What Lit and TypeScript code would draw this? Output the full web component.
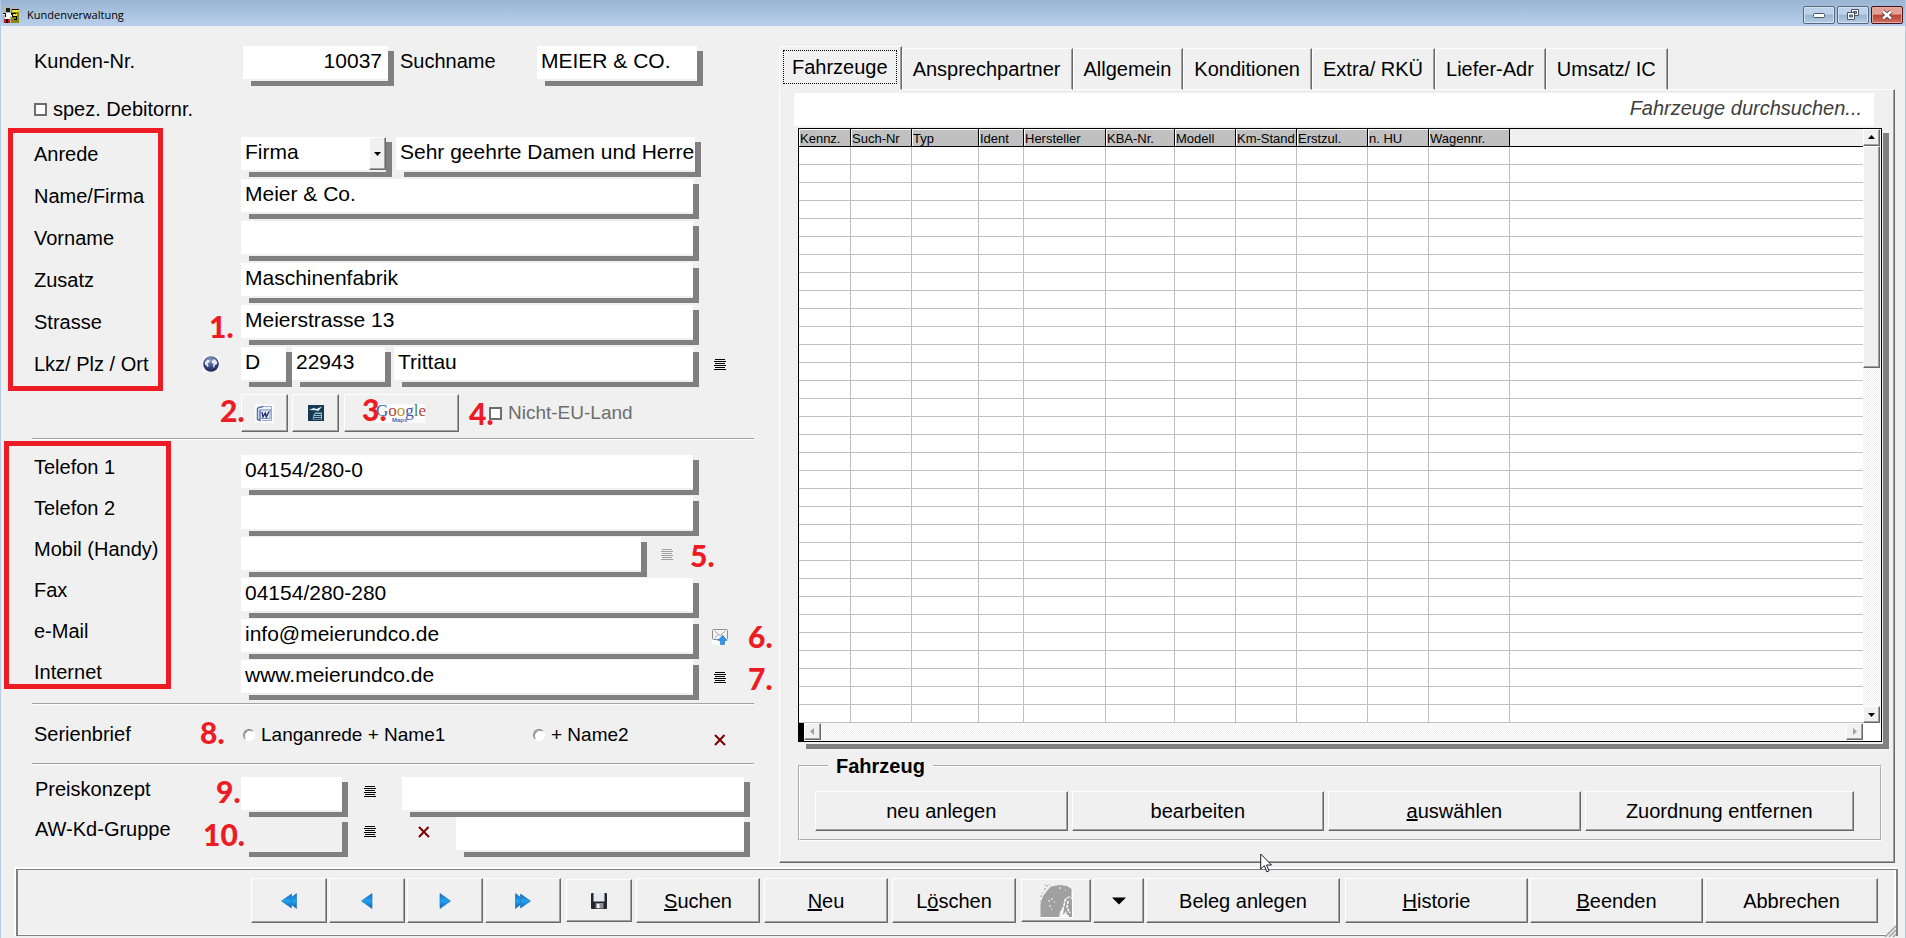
import { LitElement, html, css, svg, nothing } from "lit";
import { customElement } from "lit/decorators.js";
import { classMap } from "lit/directives/class-map.js";
import { styleMap } from "lit/directives/style-map.js";

interface Column { name: string; width: number; }
interface Mark { text: string; x: number; y: number; }

const TABS = ["Fahrzeuge", "Ansprechpartner", "Allgemein", "Konditionen", "Extra/ RKÜ", "Liefer-Adr", "Umsatz/ IC"];

const COLUMNS: Column[] = [
  { name: "Kennz.", width: 52 },
  { name: "Such-Nr", width: 61 },
  { name: "Typ", width: 67 },
  { name: "Ident", width: 45 },
  { name: "Hersteller", width: 82 },
  { name: "KBA-Nr.", width: 69 },
  { name: "Modell", width: 61 },
  { name: "Km-Stand", width: 61 },
  { name: "Erstzul.", width: 71 },
  { name: "n. HU", width: 61 },
  { name: "Wagennr.", width: 81 },
];

const ROW_COUNT = 32;

/* Numbered callouts, placed freely over the form. */
const MARKS: Mark[] = [
  { text: "1.", x: 209, y: 311 },
  { text: "2.", x: 220, y: 395 },
  { text: "3.", x: 362, y: 394 },
  { text: "4.", x: 469, y: 398 },
  { text: "5.", x: 690, y: 540 },
  { text: "6.", x: 748, y: 621 },
  { text: "7.", x: 748, y: 663 },
  { text: "8.", x: 200, y: 717 },
  { text: "9.", x: 216, y: 776 },
  { text: "10.", x: 203, y: 819 },
];

const listIcon = html`<svg width="12" height="12" viewBox="0 0 12 12" aria-hidden="true" shape-rendering="crispEdges">
  <path d="M1 .5h10M0 2.5h12M1 4.5h10M0 6.5h12M1 8.5h10M0 10.5h12" stroke="currentColor" fill="none" /></svg>`;

const crossIcon = html`<svg width="12" height="12" viewBox="0 0 12 12" aria-hidden="true">
  <path d="M1 1L11 11M10.500 1L1 11" stroke="#7d0000" stroke-width="2" fill="none" /></svg>`;

const globeIcon = html`<svg width="16" height="16" viewBox="0 0 16 16" aria-hidden="true">
  <defs><radialGradient id="sea" cx=".45" cy=".25" r=".8"><stop offset="0" stop-color="#8b9cc4" /><stop offset=".6" stop-color="#34477c" /><stop offset="1" stop-color="#141f4c" /></radialGradient></defs>
  <rect width="16" height="16" fill="#fafafa" /><circle cx="8" cy="8" r="7.800" fill="url(#sea)" />
  <path d="M2 6L4.500 3.500L7 4.500L6 6.500L4.500 7.500L5.500 9.500L5 11.500L3.500 9.500L2 8.500zM8.500 5L11.500 3L14 5.500L14 8L12 9L11 12L10 10.500L10.500 8L9 7z" fill="#e4eaf7" /></svg>`;

const wordIcon = html`<svg width="19" height="19" viewBox="0 0 19 19" aria-hidden="true">
  <rect width="19" height="19" fill="#fbfbfd" />
  <path d="M7 2.500H16.500V16.500H7" fill="#f4f7fd" stroke="#9aa9c8" />
  <path d="M2.500 4L8 2.500M2.500 4V15.500L5 16.500V6.500H16" fill="none" stroke="#5a6fae" stroke-width="1.500" />
  <rect x="5.500" y="6" width="9.500" height="8.500" fill="#e9effb" stroke="#7f93c6" />
  <path d="M7 8L8 13L10.300 9L11.300 13L14 7.500" fill="none" stroke="#1d2f66" stroke-width="1.300" /></svg>`;

const officeIcon = html`<svg width="16" height="16" viewBox="0 0 16 16" aria-hidden="true">
  <rect width="16" height="16" fill="#173a52" />
  <path d="M1 5L5.500 3L8.500 4L14 1.500L10.500 6L7 5.200z" fill="#d9eef7" />
  <path d="M7 7.500H14V14.500H4.500L5.500 10z" fill="#8fb9cc" /><path d="M7 9.500h6M6 11.500h7M5.500 13.500h7.500" stroke="#173a52" /></svg>`;

const mailIcon = html`<svg width="16" height="16" viewBox="0 0 16 16" aria-hidden="true">
  <rect width="16" height="16" fill="#fafafa" />
  <rect x=".5" y=".5" width="15" height="10" rx="1" fill="#f3f3f3" stroke="#8d8d8d" />
  <path d="M2.500 2L8 6.500L13.500 2M2.500 9L6.500 5.500M13.500 9L9.500 5.500" fill="none" stroke="#a8a8a8" />
  <path d="M10.500 6.500L15 11.500H12.500V15.500H8.500V11.500H6z" fill="#2f96ee" stroke="#1b6fc4" stroke-width=".6" /></svg>`;

const blueGradient = svg`<linearGradient id="blue" x1="0" y1="0" x2="0" y2="1"><stop offset="0" stop-color="#1566c0" /><stop offset=".5" stop-color="#1fa4f2" /><stop offset="1" stop-color="#0f5cb8" /></linearGradient>`;

const navIcon = (forward: boolean, double: boolean) => html`<svg class=${classMap({ flip: forward })} width="16" height="16" viewBox="0 0 16 16" aria-hidden="true">
  <defs>${blueGradient}</defs>
  ${double
    ? svg`<path d="M15.500 .5V15.500L6 8z" fill="url(#blue)" stroke="#2a78bd" stroke-width=".7" /><path d="M10.500 1V15L.5 8z" fill="url(#blue)" stroke="#2a78bd" stroke-width=".7" />`
    : svg`<path d="M13 .5V15.500L2.500 8z" fill="url(#blue)" stroke="#2a78bd" stroke-width=".7" />`}</svg>`;

const saveIcon = html`<svg width="16" height="16" viewBox="0 0 16 16" aria-hidden="true">
  <rect width="16" height="16" rx="1" fill="#24262b" /><rect x="2.500" y="0" width="11" height="8.500" fill="#e4e9f4" />
  <rect x="4.500" y="10" width="8" height="5.500" fill="#8d9098" /><rect x="6" y="11" width="2.500" height="4" fill="#f4f4f6" /></svg>`;

const reliefIcon = html`<svg width="34" height="34" viewBox="0 0 34 34" aria-hidden="true">
  <path d="M1.500 33V20L4 12L8 7L12 2.500L20 1L28 2L32.500 5V14L30 12L26 15L25 22L21 28L20 33z" fill="#a0a0a0" />
  <path d="M26 16L31 13L33 16V33H29L27 27L24 31L25 24z" fill="#a0a0a0" />
  <path d="M26.500 15L24.500 23L21.500 30M29 17L28 24L31 29M23 32h8" stroke="#fff" stroke-width="1.500" fill="none" stroke-dasharray="3 1" />
  <path d="M1 12h2M3 9h1M5 5h2M7 2h2M6 1h1M10 1h1M1 17h1M20 3h1M24 5h1" stroke="#a0a0a0" />
  <path d="M12 15h2M9 17h2M15 18h1M10 22h2M12 25h1M20 4h2M26 6h1" stroke="#fff" />
  <path d="M1 33.500H33.500V6" stroke="#fff" fill="none" /></svg>`;

const appIcon = html`<svg width="16" height="16" viewBox="0 0 16 16" aria-hidden="true" shape-rendering="crispEdges">
  <rect width="16" height="16" fill="#b5b8b8" /><rect x="8" y="2" width="8" height="14" fill="#8a8410" />
  <path d="M9 3h7v2H9zM8 7h6v2H8z" fill="#f5e638" /><path d="M9 2.500h7M8 6.500h5M9 9.500h4v3h-2" stroke="#000" fill="none" />
  <rect x="3" y="1" width="4" height="4" fill="#20200a" /><path d="M0 6h8l2 3-2 1-1-2v4H2V8H0z" fill="#fff" />
  <path d="M0 6.500h2v3M8 6.500l2 2" stroke="#111" fill="none" /><path d="M1 12h2v4H1zM5 12h2v4H5z" fill="#d11" /><path d="M3 12h2v4H3z" fill="#111" /></svg>`;

const caret = (dir: "up" | "down" | "left" | "right") => {
  const d = { up: "M0 5L3.500 1L7 5z", down: "M0 2L3.500 6L7 2z", left: "M5 0L1 3.500L5 7z", right: "M2 0L6 3.500L2 7z" }[dir];
  return html`<svg width="7" height="7" viewBox="0 0 7 7" aria-hidden="true"><path d=${d} fill="currentColor" /></svg>`;
};

@customElement("app-root")
export class AppRoot extends LitElement {
  static styles = css`
    :host {
      display: flex;
      flex-direction: column;
      box-sizing: border-box;
      position: relative;
      min-height: 100vh;
      background: #f0f0f0;
      border: solid #b3cbe8;
      border-width: 0 1px;
      overflow: hidden;
      color: #000;
      font: 20px/22px "Liberation Sans", Arial, sans-serif;
    }
    *, *::before, *::after { box-sizing: border-box; }
    svg { display: block; flex: none; }
    button, input, select { font: inherit; color: inherit; margin: 0; border-radius: 0; }

    .titlebar {
      display: flex;
      align-items: center;
      gap: 8px;
      height: 26px;
      padding: 3px 2px 0 2px;
      background: linear-gradient(#9ab4d3, #b8d0ea);
      font: 11px/16px "Open Sans", "Noto Sans", sans-serif;
    }
    .titlebar h1 { flex: 1; margin: 0; font: inherit; }
    .window-buttons { display: flex; gap: 2px; }
    .win {
      display: grid;
      place-items: center;
      width: 32px;
      height: 18px;
      padding: 0;
      border: 1px solid #55667d;
      border-radius: 2px;
      box-shadow: inset 0 0 0 1px #d4e2f2;
      background: linear-gradient(#bdd1e8 45%, #98b4d2 50%, #b4cde6);
    }
    .win.close {
      border-color: #47131c;
      box-shadow: inset 0 0 0 1px #e6aaa0;
      background: linear-gradient(#e3a096 45%, #bc4030 50%, #cf7261);
    }

    main {
      flex: 1;
      display: grid;
      grid-template-columns: minmax(0, 778px) minmax(0, 1fr);
      padding: 20px 10px 3px 0;
    }

    .form { padding: 0 25px 0 31px; }
    .row {
      display: grid;
      grid-template-columns: 171px 38px minmax(0, 1fr) 30px;
      padding: 0 25px 0 0;
      align-items: start;
    }
    .caption { padding: 4px 0 0 2px; white-space: nowrap; }
    .controls { grid-column: 3; display: flex; }
    .number-row { padding-right: 21px; }
    .number-row .controls { padding-left: 2px; }
    .search-label { width: 143px; }
    .number-row .search-label { padding-left: 6px; }
    .group { display: grid; gap: 2px; margin-top: 17px; }
    .group .caption { padding-top: 6px; }
    .contact { gap: 1px; margin-top: 15px; }
    .group.contact .caption, .pricing .caption { padding-top: 1px; }
    .aside { grid-column: 2; height: 34px; display: flex; align-items: center; }

    .field {
      flex: 1;
      min-width: 0;
      height: 40px;
      padding: 0 6px 7px 0;
      background:
        linear-gradient(#808080, #808080) right bottom / calc(100% - 8px) 5px no-repeat,
        linear-gradient(#808080, #808080) right bottom / 6px calc(100% - 5px) no-repeat;
    }
    .field.fixed { flex: none; }
    .w-country { width: 51px; }
    .w-zip { width: 99px; margin-right: 3px; }
    .w-short { width: 107px; }
    .w-medium { width: 151px; }
    .greeting-row { padding-right: 23px; }
    .salutation { margin-left: 4px; }
    .field input, .field select {
      display: block;
      width: 100%;
      height: 33px;
      padding: 0 0 3px 4px;
      border: 0;
      outline: 0;
      background: #fff;
      font-size: 21px;
      appearance: none;
    }
    .field input.number { text-align: right; padding-right: 6px; }
    .field input:disabled { background: #f0f0f0; }
    .combo { display: flex; }
    .combo select { flex: 1; }
    .drop {
      display: grid;
      place-items: center;
      width: 17px;
      height: 33px;
      pointer-events: none;
    }

    .glyph {
      display: flex;
      align-items: center;
      justify-content: center;
      width: 16px;
      height: 36px;
      padding: 0;
      border: 0;
      background: none;
    }
    .glyph:disabled { color: #a0a0a0; }
    .trail { justify-self: end; margin-right: 1px; }
    .inline { margin: 0 24px 0 12px; }
    .pricing .glyph { height: 30px; }

    .raised {
      border: 1px solid;
      border-color: #fff #696969 #696969 #fff;
      box-shadow: inset -1px -1px #a0a0a0;
      background: #f0f0f0;
      padding: 0;
      white-space: nowrap;
    }
    button.raised { display: flex; align-items: center; justify-content: center; font-size: 20px; }

    .option { display: flex; align-items: center; gap: 6px; white-space: nowrap; }
    .option input[type="checkbox"] {
      appearance: none;
      width: 13px;
      height: 13px;
      border: 2px solid #6d6d6d;
      background: #fff;
    }
    .option input[type="radio"] {
      appearance: none;
      width: 12px;
      height: 12px;
      border: 1px solid;
      border-color: #808080 #fff #fff #808080;
      border-radius: 50%;
      background: #fff;
      box-shadow: inset 1px 1px #a0a0a0;
    }
    .special { padding: 0 0 0 2px; margin-top: 12px; }
    .tools { margin-top: 7px; }
    .tools .raised { height: 38px; width: 47px; margin-right: 4px; }
    .tools .raised.maps { width: 115px; margin: 0 30px 0 1px; padding-right: 2px; }
    .tools .option { color: #6d6d6d; font-size: 19px; }
    .brand {
      width: 49px;
      height: 19px;
      padding: 0;
      background: #fcfcfc;
      font: 17px/14px "Liberation Serif", serif;
      text-align: left;
    }
    .brand small { display: block; padding-left: 16px; font: bold 6px/5px "Liberation Sans", sans-serif; color: #4a68b8; }
    .c-blue { color: #3c5aa6; }
    .c-red { color: #b8463c; }
    .c-gold { color: #b99a32; }
    .c-green { color: #4c8a4c; }

    hr { margin: 0; border: 0; height: 2px; border-top: 1px solid #a0a0a0; background: #fff; }
    .after-tools { margin-top: 6px; }
    .after-contact { margin-top: 3px; }
    .serial { height: 58px; align-items: center; }
    .serial .controls { padding-left: 2px; padding-top: 2px; font-size: 19px; }
    .serial .caption { padding-top: 0; }
    .serial .trail { height: 46px; align-self: end; padding: 0; }
    .serial .option:first-child { width: 290px; }
    .pricing { margin-top: 12px; }
    .pricing .row { padding-right: 4px; grid-template-columns: 171px 38px minmax(0, 1fr); }
    .pricing .caption { padding-left: 3px; }
    .pricing .glyph { margin-left: 14px; }
    .gap-a { width: 24px; }
    .pricing .gap-b { margin: 0 24px 0 38px; }

    .tabs { display: flex; align-items: flex-end; height: 43px; position: relative; }
    .tab {
      height: 42px;
      margin-bottom: -1px;
      padding: 0 11px;
      border: solid;
      border-width: 1px 1px 1px 0;
      border-color: #fff #696969 #fff #fff;
      border-radius: 3px 0 0 0;
      background: #f0f0f0;
      box-shadow: inset -1px 0 #a0a0a0, inset 1px 0 #fff;
      white-space: nowrap;
    }
    .tab.active { height: 44px; padding: 0 4px; border-bottom-color: #f0f0f0; }
    .tab.active span { display: block; padding: 5px 8px; border: 1px dotted #000; margin-bottom: 2px; }
    .panel {
      padding: 3px 5px 21px 14px;
      border: 1px solid;
      border-color: #fff #696969 #696969 #fff;
      box-shadow: inset -1px -1px #a0a0a0;
    }
    .search {
      display: block;
      width: calc(100% - 15px);
      height: 33px;
      padding: 0 12px 2px 4px;
      border: 0;
      background: #fff;
      font-size: 20px;
      font-style: italic;
      text-align: right;
    }
    .search::placeholder { color: #404040; opacity: 1; }
    .grid-shadow {
      margin: 2px 0 0 4px;
      padding: 0 7px 7px 0;
      background:
        linear-gradient(#808080, #808080) right bottom / calc(100% - 8px) 5px no-repeat,
        linear-gradient(#808080, #808080) right bottom / 6px calc(100% - 5px) no-repeat;
    }
    .grid { display: grid; grid-template-columns: minmax(0, 1fr) 18px; border: 1px solid #000; background: #fff; }
    table { width: 100%; table-layout: fixed; border-collapse: separate; border-spacing: 0; font-size: 13px; line-height: 15px; }
    th, td { height: 18px; padding: 0; border: 0 solid #c0c0c0; border-width: 0 1px 1px 0; overflow: hidden; white-space: nowrap; }
    th {
      border-color: #000;
      padding: 2px 0 0 1px;
      background: #c0c0c0;
      box-shadow: inset 1px 1px #fff;
      font-weight: normal;
      text-align: left;
    }
    th:last-child { background: #f0f0f0; border-right: 0; box-shadow: none; }
    td:last-child { border-right: 0; }
    .vbar, .hbar {
      display: flex;
      background: repeating-conic-gradient(#fff 0 25%, #f0f0f0 0 50%) 0 0 / 2px 2px;
    }
    .vbar { flex-direction: column; padding-right: 1px; }
    .vbar .thumb { height: 222px; }
    .step { display: grid; place-items: center; width: 17px; height: 17px; }
    .vbar .step:last-child { margin-top: auto; }
    .hbar { height: 18px; border-left: 5px solid #000; color: #a0a0a0; }
    .hbar .step:last-child { margin-left: auto; }

    fieldset {
      display: grid;
      grid-template-columns: 15fr 15fr 15fr 16fr;
      gap: 4px;
      min-width: 0;
      margin: 6px 7px 0 4px;
      padding: 14px 26px 8px 15px;
      border: 2px groove #fff;
    }
    legend { margin-left: 13px; padding: 0 8px; font-weight: bold; font-size: 20px; }
    fieldset .raised { height: 40px; }

    .commands {
      display: flex;
      gap: 5px;
      margin: 0 7px 2px 15px;
      padding: 8px 16px 12px 233px;
      border: 2px solid #808080;
      border-width: 1px 2px 1px 2px;
      box-shadow: inset -2px -1px #fff, 0 -2px #fff, -2px 0 #fff, -2px -2px #fff;
      position: relative;
    }
    .set { display: flex; align-items: center; gap: 4px; }
    .set.tight { gap: 2px; }
    .commands .raised { height: 45px; flex: 0 1 auto; }
    .commands .raised.low { height: 43px; }
    .commands .w-nav { width: 76px; }
    .w-save { width: 66px; }
    .w-cmd { width: 124px; }
    .w-relief { width: 70px; }
    .w-arrow { width: 51px; }
    .w-doc { width: 194px; }
    .w-history { width: 183px; }
    .w-close { width: 173px; }
    .flip { transform: scaleX(-1); }

    .overlay { position: absolute; pointer-events: none; }
    .frame { border: 5px solid #ed1c24; }
    .mark { color: #ed1c24; font: 900 30px/30px Lato, sans-serif; }
    .grip { right: 0; bottom: -2px; }
  `;

  private marker(m: Mark) {
    return html`<span class="overlay mark" style=${styleMap({ left: `${m.x - 1}px`, top: `${m.y}px` })}>${m.text}</span>`;
  }

  private frame(x: number, y: number, w: number, h: number) {
    return html`<span class="overlay frame" style=${styleMap({ left: `${x - 1}px`, top: `${y}px`, width: `${w}px`, height: `${h}px` })}></span>`;
  }

  private textRow(id: string, label: string, value = "", trail: unknown = nothing) {
    return html`<div class="row">
      <label class="caption" for=${id}>${label}</label>
      <div class="controls"><div class="field"><input id=${id} .value=${value} /></div></div>
      ${trail}
    </div>`;
  }

  private renderForm() {
    return html`<form class="form" @submit=${(e: Event) => e.preventDefault()}>
      <div class="row number-row">
        <label class="caption" for="nr">Kunden-Nr.</label>
        <div class="controls">
          <div class="field fixed w-medium"><input id="nr" class="number" value="10037" /></div>
          <label class="caption search-label" for="such">Suchname</label>
          <div class="field"><input id="such" value="MEIER &amp; CO." /></div>
        </div>
      </div>
      <label class="option special"><input type="checkbox" />spez. Debitornr.</label>

      <div class="group">
        <div class="row greeting-row">
          <label class="caption" for="anrede">Anrede</label>
          <div class="controls">
            <div class="field fixed combo w-medium">
              <select id="anrede"><option>Firma</option></select>
              <span class="drop raised">${caret("down")}</span>
            </div>
            <div class="field salutation"><input aria-label="Briefanrede" value="Sehr geehrte Damen und Herre" /></div>
          </div>
        </div>
        ${this.textRow("name", "Name/Firma", "Meier & Co.")}
        ${this.textRow("vorname", "Vorname")}
        ${this.textRow("zusatz", "Zusatz", "Maschinenfabrik")}
        ${this.textRow("strasse", "Strasse", "Meierstrasse 13")}
        <div class="row">
          <label class="caption" for="lkz">Lkz/ Plz / Ort</label>
          <span class="aside">${globeIcon}</span>
          <div class="controls">
            <div class="field fixed w-country"><input id="lkz" value="D" /></div>
            <div class="field fixed w-zip"><input aria-label="Plz" value="22943" /></div>
            <div class="field"><input aria-label="Ort" value="Trittau" /></div>
          </div>
          <button class="glyph trail" aria-label="Ort wählen">${listIcon}</button>
        </div>
      </div>
      <div class="row tools">
        <div class="controls">
          <button class="raised" aria-label="Word">${wordIcon}</button>
          <button class="raised" aria-label="Writer">${officeIcon}</button>
          <button class="raised maps"><span class="brand"><span class="c-blue">G</span><span class="c-red">o</span><span class="c-gold">o</span><span class="c-blue">g</span><span class="c-green">l</span><span class="c-red">e</span><small>Maps</small></span></button>
          <label class="option"><input type="checkbox" disabled />Nicht-EU-Land</label>
        </div>
      </div>
      <hr class="after-tools" />

      <div class="group contact">
        ${this.textRow("tel1", "Telefon 1", "04154/280-0")}
        ${this.textRow("tel2", "Telefon 2")}
        <div class="row">
          <label class="caption" for="mobil">Mobil (Handy)</label>
          <div class="controls">
            <div class="field"><input id="mobil" /></div>
            <button class="glyph inline" aria-label="SMS" disabled>${listIcon}</button>
          </div>
        </div>
        ${this.textRow("fax", "Fax", "04154/280-280")}
        ${this.textRow("mail", "e-Mail", "info@meierundco.de", html`<button class="glyph trail" aria-label="E-Mail senden">${mailIcon}</button>`)}
        ${this.textRow("web", "Internet", "www.meierundco.de", html`<button class="glyph trail" aria-label="Seite öffnen">${listIcon}</button>`)}
      </div>
      <hr class="after-contact" />

      <div class="row serial">
        <span class="caption">Serienbrief</span>
        <div class="controls">
          <label class="option"><input type="radio" name="serie" />Langanrede + Name1</label>
          <label class="option"><input type="radio" name="serie" />+ Name2</label>
        </div>
        <button class="glyph trail" aria-label="Serienbrief löschen">${crossIcon}</button>
      </div>
      <hr />

      <div class="pricing">
        <div class="row">
          <label class="caption" for="preis">Preiskonzept</label>
          <div class="controls">
            <div class="field fixed w-short"><input id="preis" /></div>
            <button class="glyph" aria-label="Preiskonzept wählen">${listIcon}</button>
            <span class="gap-a"></span>
            <div class="field"><input aria-label="Preiskonzept Bezeichnung" /></div>
          </div>
        </div>
        <div class="row">
          <label class="caption" for="gruppe">AW-Kd-Gruppe</label>
          <div class="controls">
            <div class="field fixed w-short"><input id="gruppe" disabled /></div>
            <button class="glyph" aria-label="Gruppe wählen">${listIcon}</button>
            <button class="glyph gap-b" aria-label="Gruppe löschen">${crossIcon}</button>
            <div class="field"><input aria-label="Gruppe Bezeichnung" /></div>
          </div>
        </div>
      </div>
    </form>`;
  }

  private renderVehicles() {
    return html`<section>
      <div class="tabs" role="tablist">
        ${TABS.map((t, i) => html`<button role="tab" aria-selected=${i === 0 ? "true" : "false"} class=${classMap({ tab: true, active: i === 0 })}><span>${t}</span></button>`)}
      </div>
      <div class="panel">
        <input class="search" placeholder="Fahrzeuge durchsuchen..." aria-label="Fahrzeuge durchsuchen" />
        <div class="grid-shadow">
          <div class="grid">
            <table>
              <colgroup>${COLUMNS.map((c) => html`<col style=${styleMap({ width: `${c.width}px` })} />`)}<col /></colgroup>
              <thead><tr>${COLUMNS.map((c) => html`<th scope="col">${c.name}</th>`)}<th></th></tr></thead>
              <tbody>${Array.from({ length: ROW_COUNT }, () => html`<tr>${COLUMNS.map(() => html`<td></td>`)}<td></td></tr>`)}</tbody>
            </table>
            <div class="vbar">
              <span class="step raised">${caret("up")}</span>
              <span class="thumb raised"></span>
              <span class="step raised">${caret("down")}</span>
            </div>
            <div class="hbar">
              <span class="step raised">${caret("left")}</span>
              <span class="step raised">${caret("right")}</span>
            </div>
          </div>
        </div>
        <fieldset>
          <legend>Fahrzeug</legend>
          <button class="raised">neu anlegen</button>
          <button class="raised">bearbeiten</button>
          <button class="raised"><u>a</u>uswählen</button>
          <button class="raised">Zuordnung entfernen</button>
        </fieldset>
      </div>
    </section>`;
  }

  private renderCommands() {
    return html`<footer class="commands">
      <div class="set tight">
        <button class="raised w-nav" aria-label="Erster">${navIcon(false, true)}</button>
        <button class="raised w-nav" aria-label="Zurück">${navIcon(false, false)}</button>
        <button class="raised w-nav" aria-label="Weiter">${navIcon(true, false)}</button>
        <button class="raised w-nav" aria-label="Letzter">${navIcon(true, true)}</button>
      </div>
      <div class="set">
        <button class="raised low w-save" aria-label="Speichern">${saveIcon}</button>
        <button class="raised w-cmd"><u>S</u>uchen</button>
        <button class="raised w-cmd"><u>N</u>eu</button>
        <button class="raised w-cmd">L<u>ö</u>schen</button>
      </div>
      <div class="set tight">
        <button class="raised low w-relief" aria-label="Bild" disabled>${reliefIcon}</button>
        <button class="raised w-arrow" aria-label="Mehr"><svg width="14" height="8" viewBox="0 0 14 8"><path d="M0 .5H14L7 7.500z" /></svg></button>
        <button class="raised w-doc">Beleg anlegen</button>
      </div>
      <div class="set tight">
        <button class="raised w-history"><u>H</u>istorie</button>
        <button class="raised w-close"><u>B</u>eenden</button>
        <button class="raised w-close">Abbrechen</button>
      </div>
      <svg class="overlay grip" width="12" height="12" viewBox="0 0 12 12" aria-hidden="true"><path d="M0 12L12 0V12z" fill="#f0f0f0" /><path d="M1 12L12 1M5 12L12 5M9 12L12 9" stroke="#a0a0a0" stroke-width="1.500" /></svg>
    </footer>`;
  }

  render() {
    return html`
      <header class="titlebar">
        ${appIcon}
        <h1>Kundenverwaltung</h1>
        <div class="window-buttons">
          <button class="win" aria-label="Minimieren"><svg width="12" height="6" viewBox="0 0 12 6"><rect x=".5" y="1.500" width="11" height="4" rx="1" fill="#fff" stroke="#4a5464" /></svg></button>
          <button class="win" aria-label="Wiederherstellen"><svg width="12" height="11" viewBox="0 0 12 11"><path d="M4.500 .5h7v6h-7z" fill="#fff" stroke="#4a5464" /><path d="M6.500 2.500h3v2h-3z" fill="#9ab4d3" stroke="#4a5464" /><path d="M.5 3.500h7v7h-7z" fill="#fff" stroke="#4a5464" /><path d="M2.500 6h3v2h-3z" fill="#9ab4d3" stroke="#4a5464" /></svg></button>
          <button class="win close" aria-label="Schließen"><svg width="12" height="10" viewBox="0 0 12 10"><path d="M2 1.500L10 8.500M10 1.500L2 8.500" stroke="#4d3038" stroke-width="4" /><path d="M2 1.500L10 8.500M10 1.500L2 8.500" stroke="#fff" stroke-width="2.400" /></svg></button>
        </div>
      </header>
      <main>${this.renderForm()}${this.renderVehicles()}</main>
      ${this.renderCommands()}
      ${this.frame(8, 128, 155, 263)}
      ${this.frame(4, 441, 167, 248)}
      ${MARKS.map((m) => this.marker(m))}
      <svg class="overlay" style=${styleMap({ left: "1259px", top: "853px" })} width="13" height="20" viewBox="0 0 13 20" aria-hidden="true"><path d="M.7 1V16L4.300 12.700L6.800 18.800L9 17.800L6.500 12H11.500z" fill="#fff" stroke="#1c1c2c" /></svg>
    `;
  }
}
